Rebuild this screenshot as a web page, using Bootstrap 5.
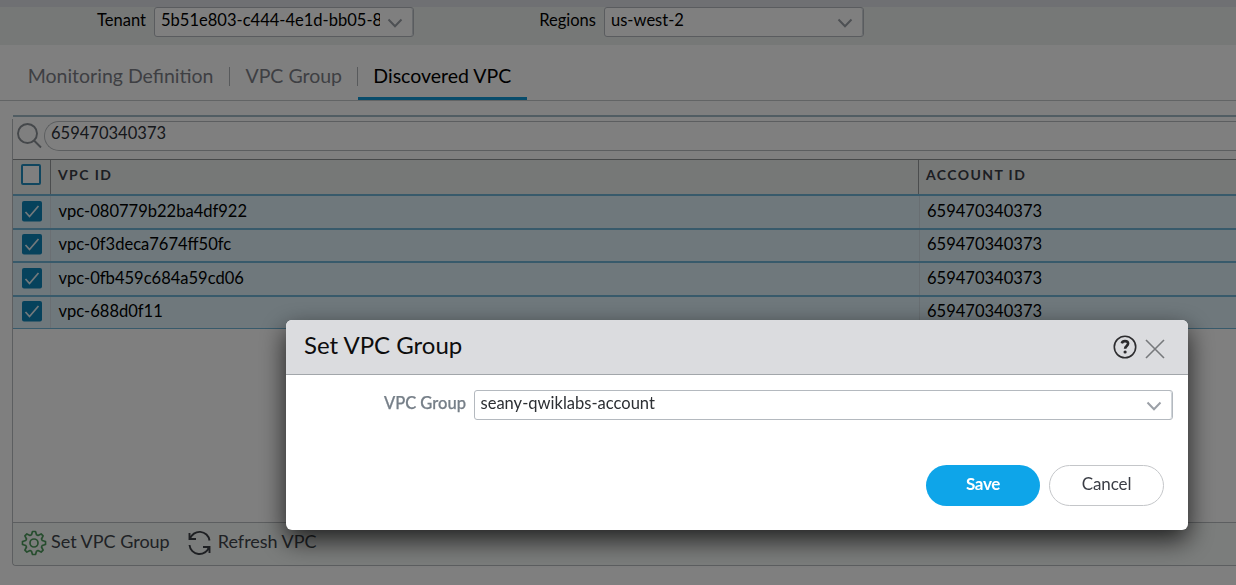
<!DOCTYPE html>
<html lang="en">
<head>
<meta charset="utf-8">
<meta name="viewport" content="width=device-width, initial-scale=1">
<title>Discovered VPC</title>
<link href="https://cdn.jsdelivr.net/npm/bootstrap@5.3.0/dist/css/bootstrap.min.css" rel="stylesheet">
<style>
  html, body { height: 100%; }
  body { font-family: Lato, "Liberation Sans", sans-serif; font-size: 16.55px; line-height: 24px; color: #000; background: #fff; overflow: hidden; }
  .app-page { height: 585px; }
  .top-strip { height: 7px; background: #dfe0e6; }
  .filter-bar { height: 38px; background: #edf1ef; }
  .filter-label { width: 146px; text-align: right; line-height: 26px; }
  .filter-label.second { width: 182px; }
  .combo { height: 30px; border: 1px solid #b4b9bf; border-radius: 3px; background: #fff; margin-left: 8px; }
  .combo-top { width: 260px; }
  .combo-text { padding-left: 5.5px; line-height: 25px; white-space: nowrap; overflow: hidden; }
  .combo-top .combo-text { margin-right: 2px; padding-left: 6px; }
  .combo-arrow { width: 31px; padding: 2px 4px 0 0; border-right: 1px solid #cfd4d9; border-radius: 3px; flex: none; }
  .tab-bar { height: 56px; border-bottom: 1px solid #c4c8ca; font-size: 19.5px; padding-left: 12px; color: #7c7f87; }
  .tab-item { padding: 0 15.3px 0 15.7px; height: 55px; line-height: 61px; white-space: nowrap; }
  .tab-sep { width: 1px; height: 19px; background: #b0b4b8; margin-top: 22px; }
  .tab-item.current { color: #000; border-bottom: 3px solid #1198d6; width: 169px; padding-left: 15px; }
  .grid-top { height: 2px; margin: 14px 0 2px 13px; background: #a3bac6; }
  .grid-panel { margin-left: 12px; height: 447px; border-left: 1px solid #b9bdc0; border-bottom: 1px solid #b9bdc0; border-bottom-left-radius: 4px; }
  .search-row { height: 40px; padding: 2px 0 0 3px; }
  .search-field { height: 30px; margin-left: 2px; padding-left: 6px; border: 1px solid #b9bdc0; border-right: 0; border-radius: 15px 0 0 15px; color: #2d3038; line-height: 23px; }
  .head-row { height: 37px; border-top: 1px solid #8f9294; border-bottom: 2px solid #71b4d6; background: #edf1ef; color: #3a3d46; font-size: 14px; font-weight: 700; letter-spacing: 1.4px; line-height: 30px; }
  .cell-check { width: 38px; border-right: 1px solid #979b9d; padding: 4px 0 0 8px; flex: none; }
  .cell-id { width: 868px; border-right: 1px solid #979b9d; padding-left: 7px; flex: none; }
  .cell-acct { padding-left: 7px; }
  .data-row { height: 33px; border-bottom: 2px solid #71b4d6; background: #def0f8; line-height: 28px; }
  .data-row.tall { height: 34px; line-height: 30px; }
  .data-row.final { height: 32px; border-bottom-width: 1px; }
  .data-row .cell-check { border-color: #d5dfe6; padding: 5px 0 0 9px; }
  .data-row:not(.tall) .cell-check { padding-top: 4px; }
  .data-row .cell-id { border-color: #d0dde4; width: 869px; padding-left: 7.5px; }
  .foot-bar { height: 43px; border-top: 1px solid #b9bdc0; background: #f7faf8; color: #40454b; font-size: 18px; padding: 0 0 6px 8px; border-bottom-left-radius: 4px; }
  .body-space { height: 193px; }
  svg { display: block; flex: none; }
  .modal-backdrop { --bs-backdrop-opacity: .5; }
  .set-dialog { width: 902px; max-width: none; margin: 320px 0 0 286px; }
  .set-dialog .modal-content { height: 210px; border: 0; border-radius: 6px; overflow: visible; color: #2c2f33; box-shadow: 0 10px 26px rgba(0,0,0,.75); }
  .set-dialog .modal-header { height: 55px; background: #dbdcdf; border-bottom: 1px solid #a2a6aa; border-radius: 6px 6px 0 0; padding: 0 23px 0 18px; }
  .dialog-title { font-size: 24px; line-height: 30px; color: #0d0d0d; padding-bottom: 4px; }
  .form-row-line { padding: 15px 15px 0 0; }
  .form-label-cell { width: 180px; text-align: right; color: #767f88; line-height: 26px; font-weight: 500; -webkit-text-stroke: .25px #767f88; }
  .button-row { gap: 9px; }
  .action-btn { height: 41px; border-radius: 21px; font-size: 17px; padding: 0 0 3px; letter-spacing: -.1px; }
  .save-btn { width: 114px; background: #0ea5e9; color: #fff; font-weight: 700; letter-spacing: -.3px; }
  .cancel-btn { width: 115px; border: 1px solid #c4c6c9; color: #3a3d45; background: #fff; }
</style>
</head>
<body>
<svg width="0" height="0" class="position-absolute" aria-hidden="true">
  <symbol id="chev" viewBox="0 0 16 10"><path d="M1.500 1.500 8 8.200l6.500-6.700" fill="none" stroke="#9ba0a7" stroke-width="2"/></symbol>
  <symbol id="checked" viewBox="0 0 20 21"><rect width="20" height="20.500" rx="2" fill="#0d84b9"/><path d="m3.500 11 4 4.500L16.500 5" fill="none" stroke="#e5f2f7" stroke-width="1.700"/></symbol>
</svg>
<div class="app-page">
  <div class="top-strip"></div>
  <div class="filter-bar d-flex align-items-start">
    <div class="filter-label">Tenant</div>
    <div class="combo combo-top d-flex"><div class="combo-text flex-grow-1">5b51e803-c444-4e1d-bb05-8</div><div class="combo-arrow d-flex align-items-center justify-content-center"><svg width="16" height="10"><use href="#chev"/></svg></div></div>
    <div class="filter-label second">Regions</div>
    <div class="combo combo-top d-flex"><div class="combo-text flex-grow-1">us-west-2</div><div class="combo-arrow d-flex align-items-center justify-content-center"><svg width="16" height="10"><use href="#chev"/></svg></div></div>
  </div>
  <nav class="tab-bar d-flex">
    <div class="tab-item">Monitoring Definition</div><div class="tab-sep"></div>
    <div class="tab-item">VPC Group</div><div class="tab-sep"></div>
    <div class="tab-item current">Discovered VPC</div>
  </nav>
  <div class="grid-top"></div>
  <div class="grid-panel">
    <div class="search-row d-flex">
      <svg width="26" height="28" viewBox="0 0 26 28" fill="none" stroke="#8b9096" stroke-width="1.900"><circle cx="11.500" cy="12.500" r="9.500"/><path d="m18 19.500 7 7"/></svg>
      <div class="search-field flex-grow-1">659470340373</div>
    </div>
    <div class="head-row d-flex">
      <div class="cell-check"><svg width="20" height="21"><rect x="1" y="1" width="18" height="19" rx="1" fill="#fff" stroke="#208cbf" stroke-width="2"/></svg></div>
      <div class="cell-id">VPC ID</div><div class="cell-acct">ACCOUNT ID</div>
    </div>
    <div class="data-row tall d-flex"><div class="cell-check"><svg width="20" height="21"><use href="#checked"/></svg></div><div class="cell-id">vpc-080779b22ba4df922</div><div class="cell-acct">659470340373</div></div>
    <div class="data-row d-flex"><div class="cell-check"><svg width="20" height="21"><use href="#checked"/></svg></div><div class="cell-id">vpc-0f3deca7674ff50fc</div><div class="cell-acct">659470340373</div></div>
    <div class="data-row tall d-flex"><div class="cell-check"><svg width="20" height="21"><use href="#checked"/></svg></div><div class="cell-id">vpc-0fb459c684a59cd06</div><div class="cell-acct">659470340373</div></div>
    <div class="data-row final d-flex"><div class="cell-check"><svg width="20" height="21"><use href="#checked"/></svg></div><div class="cell-id">vpc-688d0f11</div><div class="cell-acct">659470340373</div></div>
    <div class="body-space"></div>
    <div class="foot-bar d-flex align-items-center">
      <svg class="mt-1" width="26" height="26" viewBox="0 0 26 26" fill="none" stroke="#4d9a5c" stroke-width="1.700" stroke-linejoin="round"><circle cx="13" cy="13" r="4"/><path d="M10.500 4.800 11.500 1.500h3l1 3.300 1.500.7 3.100-1.600 2 2-1.600 3.100.7 1.500 3.300 1v3l-3.300 1-.7 1.500 1.600 3.100-2 2-3.100-1.600-1.500.7-1 3.300h-3l-1-3.300-1.500-.7-3.100 1.600-2-2 1.600-3.100-.7-1.500-3.300-1v-3l3.300-1 .7-1.500-1.600-3.100 2-2L9 5.500z"/></svg>
      <span class="ms-1">Set VPC Group</span>
      <svg class="mt-1 ms-3" width="28" height="26" viewBox="0 0 28 26" fill="none" stroke="#3d4146" stroke-width="1.900"><path d="M3.500 3v6H10M4 9a10 10 0 0 1 19.500 1.500M23.500 23v-6H17M23 17A10 10 0 0 1 3.500 15"/></svg>
      <span class="ms-1">Refresh VPC</span>
    </div>
  </div>
</div>

<div class="modal-backdrop show"></div>
<div class="modal d-block overflow-hidden" tabindex="-1" role="dialog" aria-label="Set VPC Group">
  <div class="modal-dialog set-dialog">
    <div class="modal-content">
      <div class="modal-header">
        <div class="dialog-title">Set VPC Group</div>
        <div class="d-flex align-items-center pt-1">
          <svg class="mb-1" width="24" height="24" viewBox="0 0 24 24"><circle cx="12" cy="12" r="10.700" fill="none" stroke="#2d2d2f" stroke-width="1.600"/><path d="M8.800 8.300C9.200 6.800 10.300 6.100 12 6.100c1.900 0 3.100 1 3.100 2.500 0 2.300-3 2.500-3 5.200" fill="none" stroke="#29292b" stroke-width="2.600"/><circle cx="12.100" cy="17" r="1.600" fill="#29292b"/></svg>
          <svg class="ms-2" width="20" height="20" viewBox="0 0 20 20"><path d="m1 1 18 18M19 1 1 19" stroke="#77797c" stroke-width="1.600"/></svg>
        </div>
      </div>
      <div class="form-row-line d-flex">
        <div class="form-label-cell">VPC Group</div>
        <div class="combo flex-grow-1 d-flex"><div class="combo-text flex-grow-1">seany-qwiklabs-account</div><div class="combo-arrow d-flex align-items-center justify-content-center"><svg width="16" height="10"><use href="#chev"/></svg></div></div>
      </div>
      <div class="button-row d-flex justify-content-end mt-auto pb-4 pe-4">
        <button class="btn action-btn save-btn" type="button">Save</button>
        <button class="btn action-btn cancel-btn" type="button">Cancel</button>
      </div>
    </div>
  </div>
</div>
<script src="https://cdn.jsdelivr.net/npm/bootstrap@5.3.0/dist/js/bootstrap.bundle.min.js"></script>
</body>
</html>
